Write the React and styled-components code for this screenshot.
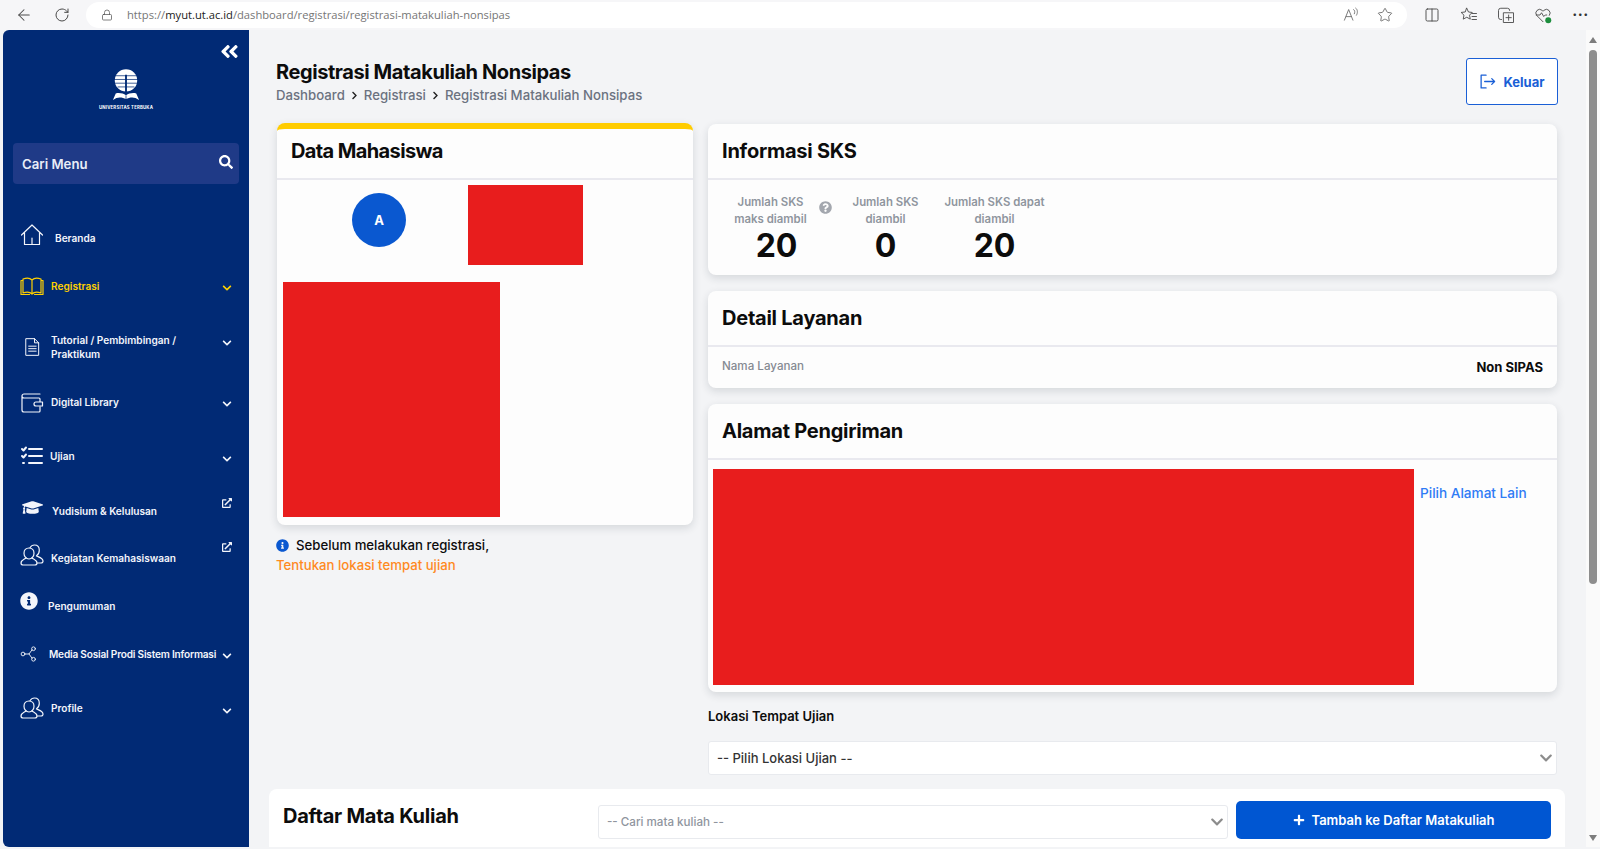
import React from 'react';
import styled, { createGlobalStyle } from 'styled-components';
import { FaAngleDoubleLeft, FaChevronDown, FaChevronRight, FaExternalLinkAlt, FaGraduationCap, FaInfoCircle, FaPlus, FaQuestionCircle, FaSearch } from 'react-icons/fa';
import { ArrowLeft, Columns2, Lock, RotateCw, Star } from 'lucide-react';

const GlobalStyle = createGlobalStyle`
    html, body { margin: 0; padding: 0; height: 100%; overflow: hidden; background: #f3f4f6; }
    body { font-family: Inter, "Liberation Sans", sans-serif; color: #0c0c0c; }
    * { box-sizing: border-box; }
`;

const Shell = styled.div` height: 849px; display: flex; flex-direction: column; overflow: hidden; `;

const Toolbar = styled.header` height: 30px; flex: none; display: flex; align-items: center; background: #f6f6f8; padding: 0 0 1px 5px; `;
const ToolBtn = styled.span` width: ${p => p.$w || 38}px; display: flex; justify-content: center; align-items: center; color: #4a4a4a; flex: none; `;
const UrlPill = styled.div` flex: 1; height: 26px; margin-left: 5px; margin-right: 6px; display: flex; align-items: center; background: #fff; border-radius: 13px; padding: 0 6px 0 15px; `;
const LockSlot = styled.span` display: flex; color: #555; margin-right: 14px; `;
const UrlText = styled.span` flex: 1; font-family: "Open Sans", sans-serif; font-size: 11.2px; color: #767676; white-space: nowrap; `;
const UrlHost = styled.span` color: #1a1a1a; `;
const PillBtn = styled.span` width: 33px; display: flex; justify-content: center; color: #666; `;
const Dots = styled.span` font-size: 15px; font-weight: 700; letter-spacing: 0.5px; line-height: 10px; color: #333; `;

const Body = styled.div` flex: 1; min-height: 0; display: flex; padding-left: 3px; padding-bottom: 2px; `;

const Sidebar = styled.aside` width: 246px; flex: none; background: #012a75; border-radius: 6px 0 0 6px; padding: 11px 10px 0 10px; color: #fff; overflow: hidden; `;
const Collapse = styled.div` display: flex; justify-content: flex-end; margin-right: -1px; font-size: 21px; line-height: 21px; height: 21px; `;
const LogoBlock = styled.div` height: 50px; margin-top: 7px; display: flex; flex-direction: column; align-items: center; `;
const LogoText = styled.span` font-size: 4.3px; font-weight: 700; letter-spacing: 0.2px; margin-top: 2px; color: #fff; `;
const SearchBox = styled.div` height: 41px; margin-top: 24px; background: #1f3a87; border-radius: 4px; display: flex; align-items: center; justify-content: space-between; padding: 0 6px 0 9px; font-size: 13.2px; font-weight: 600; color: #e9edf7; `;
const SearchIcon = styled(FaSearch)` font-size: 14px; color: #fff; margin-bottom: 3px; `;

const Nav = styled.nav` margin: 24px 0 0 7px; `;
const NavRow = styled.div` height: ${p => p.$h}px; display: flex; align-items: center; color: ${p => (p.$active ? '#ffd100' : '#f3f5fb')}; `;
const NavIcon = styled.span` width: 24px; height: 24px; flex: none; display: flex; align-items: center; justify-content: ${p => (p.$start ? 'flex-start' : 'center')}; `;
const NavLabel = styled.span` flex: 1; min-width: 0; margin-left: ${p => p.$gap}px; padding-top: ${p => p.$drop || 0}px; font-size: 10.1px; font-weight: 600; line-height: 14px; white-space: ${p => (p.$single ? 'nowrap' : 'normal')}; letter-spacing: ${p => (p.$single ? -0.2 : 0)}px; `;
const NavEnd = styled.span` width: 24px; flex: none; display: flex; justify-content: center; margin-top: ${p => p.$shift || 0}px; margin-bottom: ${p => p.$lift || 0}px; font-size: 10px; `;

const Main = styled.main` flex: 1; min-width: 0; padding-top: 28px; overflow: hidden; `;
const PageHead = styled.div` display: flex; justify-content: space-between; padding: 0 28px 0 27px; height: 65px; `;
const Title = styled.h1` margin: 0; font-size: 20px; font-weight: 700; letter-spacing: -0.42px; line-height: 28px; `;
const Crumbs = styled.div` display: flex; align-items: center; font-size: 13.2px; font-weight: 500; color: #6b7280; line-height: 18px; gap: 5px; `;
const CrumbArrow = styled(FaChevronRight)` color: #222; font-size: 9px; `;
const LogoutBtn = styled.button` width: 92px; height: 47px; background: #fff; border: 1px solid #1a5fd6; border-radius: 3px; display: flex; align-items: center; justify-content: center; gap: 7px; font: 700 13px Inter, sans-serif; color: #1a5fd6; padding: 0; `;

const Columns = styled.div` display: grid; grid-template-columns: 417px 849px; gap: 15px; padding-left: 27px; `;
const LeftCol = styled.div` padding-left: 1px; `;
const Stack = styled.div` display: flex; flex-direction: column; gap: 16px; padding-top: 1px; `;
const Card = styled.section` background: #fdfdfd; border-radius: 8px; box-shadow: 0 3px 9px rgba(30, 40, 60, 0.14); overflow: hidden; border-top: ${p => (p.$accent ? '6px solid #ffcc00' : '0')}; `;
const CardHead = styled.div` height: ${p => p.$h || 56}px; padding: 0 14px; display: flex; align-items: center; border-bottom: 2px solid #e9e9ef; `;
const CardTitle = styled.h2` margin: 0; font-size: 20px; font-weight: 700; letter-spacing: ${p => (p.$raised ? -0.62 : -0.24)}px; padding-bottom: ${p => (p.$raised ? 5 : 0)}px; `;

const StudentBody = styled.div` height: 345px; padding: 5px 6px 0; `;
const StudentTop = styled.div` display: flex; height: 97px; `;
const AvatarSlot = styled.div` width: 185px; display: flex; justify-content: center; padding: 8px 0 0 7px; `;
const Avatar = styled.div` width: 54px; height: 54px; border-radius: 50%; background: #0a58d0; color: #fff; font-size: 13px; font-weight: 700; display: flex; align-items: center; justify-content: center; `;
const RedBlock = styled.div` width: ${p => p.$w}px; height: ${p => p.$h}px; flex: none; background: #e81d1d; `;

const Note = styled.div` margin: 10px 0 0 -1px; font-size: 13.2px; font-weight: 500; line-height: 20px; display: flex; align-items: center; gap: 7px; `;
const NoteIcon = styled(FaInfoCircle)` color: #0a58d0; font-size: 13px; `;
const NoteLink = styled.a` display: block; margin-left: -1px; color: #ff8a1f; font-size: 13.2px; font-weight: 500; line-height: 20px; `;

const StatGrid = styled.div` display: grid; grid-template-columns: repeat(3, 109px); padding: 14px 0 0 14px; height: 95px; `;
const Stat = styled.div` position: relative; text-align: center; `;
const StatLabel = styled.div` font-size: 11.4px; font-weight: 600; color: #8f959e; line-height: 17px; padding-right: ${p => p.$pr || 0}px; `;
const StatValue = styled.div` font-size: 32px; font-weight: 700; line-height: 34px; margin-top: 1px; `;
const HelpIcon = styled(FaQuestionCircle)` position: absolute; top: 7px; right: -1px; font-size: 13px; color: #a3a7ae; `;

const ServiceRow = styled.div` height: 41px; padding: 0 14px; display: flex; justify-content: space-between; align-items: center; `;
const ServiceName = styled.span` font-size: 11.6px; font-weight: 500; color: #858a92; margin-bottom: 3px; `;
const ServiceValue = styled.span` font-size: 13px; font-weight: 700; margin-bottom: 1px; `;

const AddressBody = styled.div` height: 232px; display: flex; padding: 9px 0 0 5px; `;
const AddressLink = styled.a` color: #2f7bf5; font-size: 13.6px; font-weight: 500; margin: 16px 0 0 6px; `;

const FieldLabel = styled.div` font-size: 13px; font-weight: 600; margin-top: 15px; line-height: 18px; `;
const SelectBox = styled.div` height: 34px; margin-top: 16px; background: #fff; border: 1px solid #e8eaee; border-radius: 3px; display: flex; align-items: center; justify-content: space-between; padding: 0 3px 0 8px; font-size: 13px; font-weight: 500; color: #333; `;
const Caret = styled(FaChevronDown)` color: #8c8c8c; font-size: 14px; `;

const BottomCard = styled.section` margin: 14px 21px 0 20px; height: 70px; background: #fff; border-radius: 8px 8px 0 0; display: flex; align-items: flex-start; padding: 12px 14px 0; `;
const BottomTitle = styled.h2` margin: 0; width: 315px; font-size: 20px; font-weight: 700; letter-spacing: -0.25px; line-height: 28px; padding-top: 1px; `;
const SearchSelect = styled(SelectBox)` margin-top: 4px; width: 630px; font-size: 11.6px; color: #8f959e; `;
const AddBtn = styled.button` width: 315px; height: 38px; margin-left: 8px; background: #0056d2; color: #fff; border: 0; border-radius: 5px; display: flex; align-items: center; justify-content: center; gap: 7px; font: 600 13px Inter, sans-serif; `;

const Scrollbar = styled.div` width: 14px; flex: none; background: #fafafa; display: flex; flex-direction: column; align-items: center; padding-top: 7px; `;
const ArrowUp = styled.span` width: 0; height: 0; border: 4px solid transparent; border-top: 0; border-bottom: 6px solid #7d7d7d; `;
const Thumb = styled.span` width: 8px; height: 534px; margin-top: 7px; background: #8d8d8d; border-radius: 4px; `;
const ArrowDown = styled.span` width: 0; height: 0; margin-top: auto; margin-bottom: 6px; border: 4px solid transparent; border-bottom: 0; border-top: 6px solid #7d7d7d; `;

const Ico = ({ children, w = 24, h = 24, vb = '0 0 24 24', sw = 1.2 }) => (
    <svg width={w} height={h} viewBox={vb} fill="none" stroke="currentColor" strokeWidth={sw} strokeLinecap="round" strokeLinejoin="round">{children}</svg>
);

const HouseIcon = () => <Ico><path d="M1.5 12 12 2l10.5 10M4.5 10v11.5h15V10M12 21.5V15" /></Ico>;
const BookIcon = () => <Ico><path d="M3 5c3-1 7-1 9 1 2-2 6-2 9-1v14c-3-1-7-1-9 1-2-2-6-2-9-1zM12 6v14M3 6.5H1v14h8.5M21 6.5h2v14h-8.5" /></Ico>;
const FileIcon = () => <Ico w={20} h={22}><path d="M5 2h10l5 5v15H5zM15 2v5h5M8 11h9M8 14h9M8 17h9" /></Ico>;
const WalletIcon = () => <Ico><path d="M20 4H4a2 2 0 0 0-2 2v14a2 2 0 0 0 2 2h15a1 1 0 0 0 1-1v-4M2 6.5A2 2 0 0 0 4 8h15a1 1 0 0 1 1 1v3M16 12h6.5v4H16a2 2 0 0 1 0-4z" /></Ico>;
const ChecksIcon = () => <Ico sw={2}><path d="M2 5l1.500 1.500L6 3.500M2 12l1.500 1.500L6 10.500M9 5h13M9 12h13M9 19h13M3 19h1" /></Ico>;
const PeopleIcon = () => (
    <Ico>
        <path d="M9 5c3 0 5 2.200 5 5.200s-2 5.800-5 5.800-5-2.800-5-5.800S6 5 9 5z" />
        <path d="M6 15c-2 1.500-5 2.300-5 5 0 1.200.8 2 2.200 2h11.600c1.400 0 2.200-.8 2.200-2 0-2.700-3-3.500-5-5" />
        <path d="M10 4.800C11 3 12.500 2 14.500 2c3 0 4.800 2.200 4.800 5.200 0 2.300-1 4.400-2.800 5.600M16.500 13c2 1 6.300 1.800 6.500 5 .1 1.300-.8 2-2 2h-3.500" />
    </Ico>
);
const ShareIcon = () => <Ico w={18} h={18} sw={1.200}><circle cx="4" cy="12" r="2.500" /><circle cx="18" cy="5" r="2.500" /><circle cx="18" cy="19" r="2.500" /><path d="M6.500 12H12l4-5.500M12 12l4 5.500" /></Ico>;
const LogoutIcon = () => <Ico w={17} h={17}><path d="M10 3H3v18h7M8 12h14M18 8l4 4-4 4" strokeWidth="1.800" /></Ico>;
const ReadIcon = () => <Ico w={17} h={17}><path d="M2 20 8 5l6 15M4.500 15h7M15 5c2 1 2 4 1 6M18 3c3 2 3 7 1 10" /></Ico>;
const FavListIcon = () => <Ico w={18} h={18}><path d="M9 3l2.300 5 5 .6-3.600 3.600 1 5.300L9 15l-4.700 2.500 1-5.300L1.500 8.600l5-.6zM16 10h6M16 14h6M16 18h6" /></Ico>;
const CollectIcon = () => <Ico w={18} h={18}><path d="M6 18H5a3 3 0 0 1-3-3V6a3 3 0 0 1 3-3h9a3 3 0 0 1 3 3M9 9h13v13H9zM15.500 12v7M12 15.500h7" /></Ico>;
const HeartIcon = () => <Ico w={18} h={18}><path d="M12 21 3.500 12.500a5 5 0 0 1 7-7L12 7l1.500-1.500a5 5 0 0 1 7 7M3 12h5l2-3 3 5 2-2h2" /><circle cx="19" cy="19" r="4" fill="#1e8e3e" stroke="none" /></Ico>;

const UtLogo = () => (
    <svg width="28" height="34" viewBox="0 0 30 36">
        <circle cx="15" cy="12" r="12" fill="#fff" />
        <g stroke="#012a75" strokeWidth="0.800">
            <path d="M2 7h26M2 11h26M3 15h24M6 19h18" />
            <path d="M15 6v20" strokeWidth="2" />
        </g>
        <path d="M1 33c5-4 10-3 14-1 4-2 9-3 14 1l-3-7c-4-1-8 0-11 2-3-2-7-3-11-2z" fill="#fff" />
        <path d="M15 28v5" stroke="#012a75" strokeWidth="0.800" />
    </svg>
);

const navItems = [
    { label: 'Beranda', icon: <HouseIcon />, h: 54, gap: 11, drop: 6 },
    { label: 'Registrasi', icon: <BookIcon />, h: 48, gap: 7, active: true, end: 'down', shift: 4 },
    { label: 'Tutorial / Pembimbingan / Praktikum', icon: <FileIcon />, h: 74, gap: 7, end: 'down', lift: 8 },
    { label: 'Digital Library', icon: <WalletIcon />, h: 36, gap: 7, end: 'down', shift: 4 },
    { label: 'Ujian', icon: <ChecksIcon />, h: 72, gap: 6, end: 'down', shift: 6 },
    { label: 'Yudisium & Kelulusan', icon: <FaGraduationCap size={21} />, h: 30, gap: 8, drop: 8, end: 'link', lift: 8 },
    { label: 'Kegiatan Kemahasiswaan', icon: <PeopleIcon />, h: 65, gap: 7, drop: 7, end: 'link', lift: 16 },
    { label: 'Pengumuman', icon: <FaInfoCircle size={18} />, iconStart: true, h: 28, gap: 4, drop: 10 },
    { label: 'Media Sosial Prodi Sistem Informasi', single: true, icon: <ShareIcon />, iconStart: true, h: 78, gap: 5, end: 'down', shift: 4 },
    { label: 'Profile', icon: <PeopleIcon />, h: 30, gap: 7, end: 'down', shift: 6 },
];

const stats = [
    { label: <>Jumlah SKS<br />maks diambil</>, value: 20, pr: 12, help: true },
    { label: <>Jumlah SKS<br />diambil</>, value: 0 },
    { label: <>Jumlah SKS dapat<br />diambil</>, value: 20 },
];

const App = () => (
    <Shell>
        <GlobalStyle />
        <Toolbar>
            <ToolBtn><ArrowLeft size={18} strokeWidth={1.4} /></ToolBtn>
            <ToolBtn><RotateCw size={16} strokeWidth={1.5} /></ToolBtn>
            <UrlPill>
                <LockSlot><Lock size={12} strokeWidth={1.5} /></LockSlot>
                <UrlText>https://<UrlHost>myut.ut.ac.id</UrlHost>/dashboard/registrasi/registrasi-matakuliah-nonsipas</UrlText>
                <PillBtn><ReadIcon /></PillBtn>
                <PillBtn><Star size={16} strokeWidth={1.3} /></PillBtn>
            </UrlPill>
            <ToolBtn $w={37}><Columns2 size={16} strokeWidth={1.4} /></ToolBtn>
            <ToolBtn $w={37}><FavListIcon /></ToolBtn>
            <ToolBtn $w={37}><CollectIcon /></ToolBtn>
            <ToolBtn $w={37}><HeartIcon /></ToolBtn>
            <ToolBtn $w={39}><Dots>···</Dots></ToolBtn>
        </Toolbar>
        <Body>
            <Sidebar>
                <Collapse><FaAngleDoubleLeft /></Collapse>
                <LogoBlock>
                    <UtLogo />
                    <LogoText>UNIVERSITAS TERBUKA</LogoText>
                </LogoBlock>
                <SearchBox>
                    Cari Menu
                    <SearchIcon />
                </SearchBox>
                <Nav>
                    {navItems.map(item => (
                        <NavRow key={item.label} $h={item.h} $active={item.active}>
                            <NavIcon $start={item.iconStart}>{item.icon}</NavIcon>
                            <NavLabel $gap={item.gap} $drop={item.drop} $single={item.single}>{item.label}</NavLabel>
                            <NavEnd $shift={item.shift} $lift={item.lift}>
                                {item.end === 'down' && <FaChevronDown />}
                                {item.end === 'link' && <FaExternalLinkAlt size={10} />}
                            </NavEnd>
                        </NavRow>
                    ))}
                </Nav>
            </Sidebar>
            <Main>
                <PageHead>
                    <div>
                        <Title>Registrasi Matakuliah Nonsipas</Title>
                        <Crumbs>
                            Dashboard <CrumbArrow /> Registrasi <CrumbArrow /> Registrasi Matakuliah Nonsipas
                        </Crumbs>
                    </div>
                    <LogoutBtn><LogoutIcon />Keluar</LogoutBtn>
                </PageHead>
                <Columns>
                    <LeftCol>
                        <Card $accent>
                            <CardHead $h={51}><CardTitle $raised>Data Mahasiswa</CardTitle></CardHead>
                            <StudentBody>
                                <StudentTop>
                                    <AvatarSlot><Avatar>A</Avatar></AvatarSlot>
                                    <RedBlock $w={115} $h={80} />
                                </StudentTop>
                                <RedBlock $w={217} $h={235} />
                            </StudentBody>
                        </Card>
                        <Note><NoteIcon />Sebelum melakukan registrasi,</Note>
                        <NoteLink>Tentukan lokasi tempat ujian</NoteLink>
                    </LeftCol>
                    <Stack>
                        <Card>
                            <CardHead><CardTitle>Informasi SKS</CardTitle></CardHead>
                            <StatGrid>
                                {stats.map((stat, i) => (
                                    <Stat key={i}>
                                        <StatLabel $pr={stat.pr}>{stat.label}</StatLabel>
                                        <StatValue>{stat.value}</StatValue>
                                        {stat.help && <HelpIcon />}
                                    </Stat>
                                ))}
                            </StatGrid>
                        </Card>
                        <Card>
                            <CardHead><CardTitle>Detail Layanan</CardTitle></CardHead>
                            <ServiceRow>
                                <ServiceName>Nama Layanan</ServiceName>
                                <ServiceValue>Non SIPAS</ServiceValue>
                            </ServiceRow>
                        </Card>
                        <div>
                            <Card>
                                <CardHead><CardTitle>Alamat Pengiriman</CardTitle></CardHead>
                                <AddressBody>
                                    <RedBlock $w={701} $h={216} />
                                    <AddressLink>Pilih Alamat Lain</AddressLink>
                                </AddressBody>
                            </Card>
                            <FieldLabel>Lokasi Tempat Ujian</FieldLabel>
                            <SelectBox>-- Pilih Lokasi Ujian --<Caret /></SelectBox>
                        </div>
                    </Stack>
                </Columns>
                <BottomCard>
                    <BottomTitle>Daftar Mata Kuliah</BottomTitle>
                    <SearchSelect>-- Cari mata kuliah --<Caret /></SearchSelect>
                    <AddBtn><FaPlus size={12} />Tambah ke Daftar Matakuliah</AddBtn>
                </BottomCard>
            </Main>
            <Scrollbar>
                <ArrowUp />
                <Thumb />
                <ArrowDown />
            </Scrollbar>
        </Body>
    </Shell>
);

export default App;
